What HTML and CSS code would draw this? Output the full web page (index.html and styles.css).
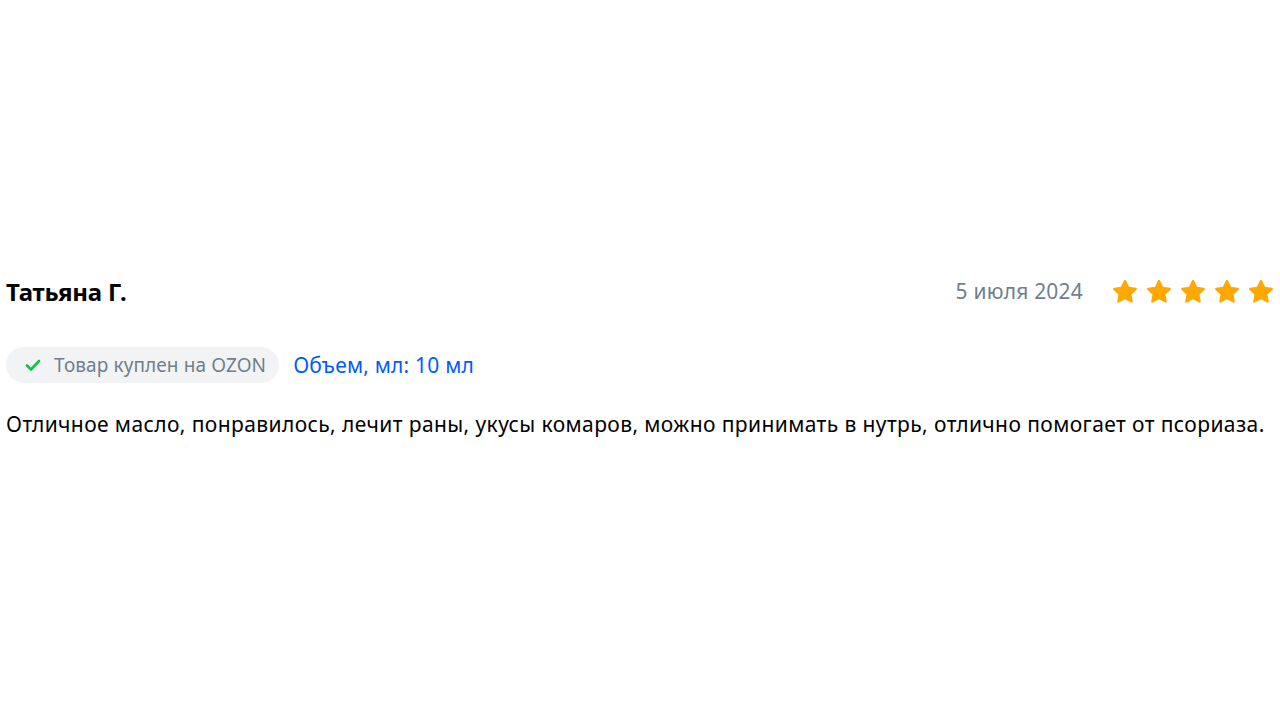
FILE: index.html
```html
<!DOCTYPE html>
<html lang="ru">
<head>
    <meta charset="UTF-8">
    <meta name="viewport" content="width=device-width, initial-scale=1.0">
    <title>Отзыв</title>
    <link rel="stylesheet" href="styles.css">
</head>
<body>

<div class="review">
    <div class="review-head">
        <div class="author">Татьяна Г.</div>
        <div class="meta">
            <span class="date">5 июля 2024</span>
            <div class="stars">
                <svg class="star" viewBox="0 0 24 24"><path d="M12 1.8l3.1 6.3 6.9 1-5 4.9 1.2 6.9L12 17.6l-6.2 3.3L7 14 2 9.1l6.9-1z"/></svg>
                <svg class="star" viewBox="0 0 24 24"><path d="M12 1.8l3.1 6.3 6.9 1-5 4.9 1.2 6.9L12 17.6l-6.2 3.3L7 14 2 9.1l6.9-1z"/></svg>
                <svg class="star" viewBox="0 0 24 24"><path d="M12 1.8l3.1 6.3 6.9 1-5 4.9 1.2 6.9L12 17.6l-6.2 3.3L7 14 2 9.1l6.9-1z"/></svg>
                <svg class="star" viewBox="0 0 24 24"><path d="M12 1.8l3.1 6.3 6.9 1-5 4.9 1.2 6.9L12 17.6l-6.2 3.3L7 14 2 9.1l6.9-1z"/></svg>
                <svg class="star" viewBox="0 0 24 24"><path d="M12 1.8l3.1 6.3 6.9 1-5 4.9 1.2 6.9L12 17.6l-6.2 3.3L7 14 2 9.1l6.9-1z"/></svg>
            </div>
        </div>
    </div>

    <div class="review-tags">
        <span class="bought">
            <svg class="check" viewBox="0 0 18 18"><path d="M3 9.5l4 4 8-8.5"/></svg>
            Товар куплен на OZON
        </span>
        <span class="variant">Объем, мл: 10 мл</span>
    </div>

    <p class="review-text">Отличное масло, понравилось, лечит раны, укусы комаров, можно принимать в нутрь, отлично помогает от псориаза.</p>
</div>

</body>
</html>
```

FILE: styles.css
```css
body {
    margin: 0;
    font-family: "Noto Sans", "Open Sans", sans-serif;
    background-color: white;
    color: #001a34;
}

.review {
    padding: 268px 6px 0 6px;
}

.review-head {
    display: flex;
    justify-content: space-between;
    align-items: center;
    height: 46px;
}

.author {
    font-size: 24px;
    font-weight: bold;
    color: #000000;
    letter-spacing: -0.2px;
}

.meta {
    display: flex;
    align-items: center;
    gap: 29px;
}

.date {
    font-size: 21px;
    letter-spacing: 0.2px;
    color: #707f8d;
}

.stars {
    display: flex;
    gap: 8px;
    margin-top: 2px;
}

.star {
    width: 26px;
    height: 26px;
    fill: #ffa800;
    stroke: #ffa800;
    stroke-width: 2;
    stroke-linejoin: round;
}

/* Метки под именем */
.review-tags {
    display: flex;
    align-items: center;
    gap: 14px;
    margin-top: 33px;
}

.bought {
    display: flex;
    align-items: center;
    gap: 12px;
    height: 36px;
    padding: 0 13px 0 18px;
    border-radius: 18px;
    background-color: #f2f3f5;
    color: #707f8d;
    font-size: 19px;
    letter-spacing: 0.1px;
}

.check {
    width: 18px;
    height: 18px;
    fill: none;
    stroke: #10c44c;
    stroke-width: 2.6;
    stroke-linecap: round;
    stroke-linejoin: round;
}

.variant {
    font-size: 21px;
    letter-spacing: 0.2px;
    color: #005bff;
}

.review-text {
    margin: 27px 0 0 0;
    font-size: 21px;
    letter-spacing: 0.4px;
    color: #000000;
}
```
